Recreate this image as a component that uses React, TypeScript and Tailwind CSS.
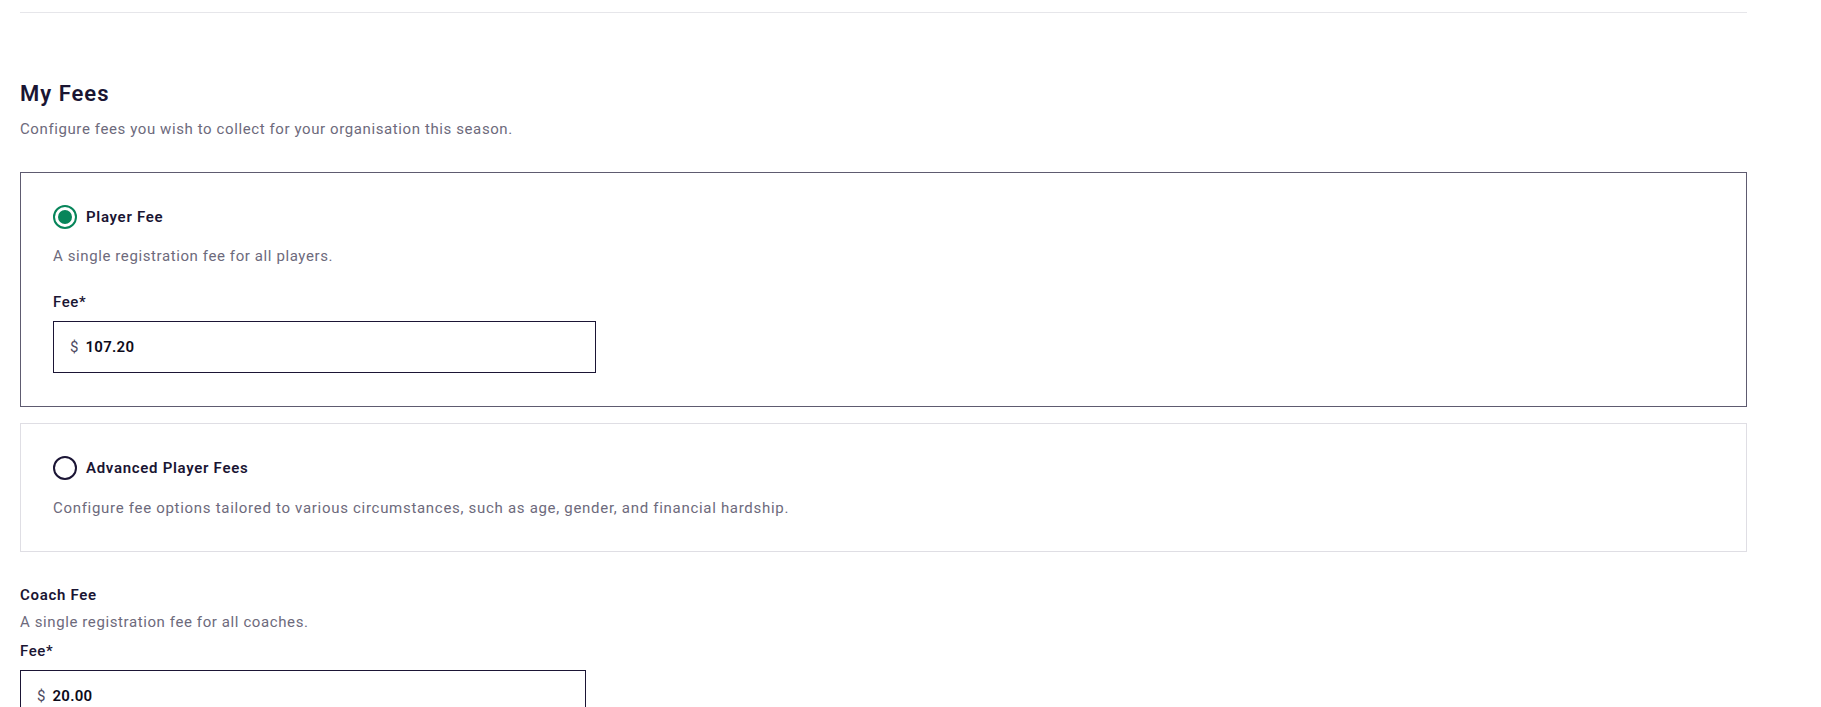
import React, { useState } from "react";

type FeeOption = "player" | "advanced";

const font = { fontFamily: "Roboto, 'Liberation Sans', sans-serif" };

const Radio = ({ checked }: { checked: boolean }) =>
  checked ? (
    <span className="flex h-6 w-6 shrink-0 items-center justify-center rounded-full border-[2.5px] border-[#07855a]">
      <span className="h-[14px] w-[14px] rounded-full bg-[#07855a]" />
    </span>
  ) : (
    <span className="h-6 w-6 shrink-0 rounded-full border-2 border-[#1b1535]" />
  );

const MoneyInput = ({ value, width }: { value: string; width: string }) => (
  <div className={`flex h-[52px] items-center gap-[7px] border border-[#1b1535] bg-white px-4 ${width}`}>
    <span className="text-[15px] text-[#4d4a60]">$</span>
    <span className="text-[15px] font-semibold tracking-[0.3px] text-[#0d0b1a]">{value}</span>
  </div>
);

const App = () => {
  const [option, setOption] = useState<FeeOption>("player");

  return (
    <div className="min-h-screen bg-white pl-5 pr-[74px] pt-3 text-[#1a1533]" style={font}>
      <div className="border-t border-[#e6e6ea]" />

      <h2 className="mt-[67px] text-[22px] font-semibold leading-7 tracking-[1px]">My Fees</h2>
      <p className="mt-[11px] text-[15px] leading-5 tracking-[0.6px] text-[#6d6a7c]">
        Configure fees you wish to collect for your organisation this season.
      </p>

      <div
        onClick={() => setOption("player")}
        className={`mt-[33px] cursor-pointer border p-8 ${option === "player" ? "border-[#5e5b70]" : "border-[#dfdee4]"}`}
      >
        <div className="flex items-center gap-[9px]">
          <Radio checked={option === "player"} />
          <span className="text-[15px] font-semibold tracking-[0.7px]">Player Fee</span>
        </div>
        <p className="mt-[17px] text-[15px] leading-5 tracking-[0.6px] text-[#6d6a7c]">
          A single registration fee for all players.
        </p>
        {option === "player" && (
          <>
            <div className="mt-[26px] text-[15px] font-medium leading-5 tracking-[0.6px]">Fee*</div>
            <div className="mt-[9px]">
              <MoneyInput value="107.20" width="w-[543px]" />
            </div>
          </>
        )}
        <div className="h-px" />
      </div>

      <div
        onClick={() => setOption("advanced")}
        className={`mt-4 cursor-pointer border p-8 ${option === "advanced" ? "border-[#5e5b70]" : "border-[#dfdee4]"}`}
      >
        <div className="flex items-center gap-[9px]">
          <Radio checked={option === "advanced"} />
          <span className="text-[15px] font-semibold tracking-[0.7px]">Advanced Player Fees</span>
        </div>
        <p className="mt-[18px] text-[15px] leading-5 tracking-[0.7px] text-[#6d6a7c]">
          Configure fee options tailored to various circumstances, such as age, gender, and financial hardship.
        </p>
        <div className="h-px" />
      </div>

      <div className="mt-[31px] text-[15px] font-semibold leading-6 tracking-[0.7px]">Coach Fee</div>
      <p className="mt-[3px] text-[15px] leading-6 tracking-[0.6px] text-[#6d6a7c]">
        A single registration fee for all coaches.
      </p>
      <div className="mt-[5px] text-[15px] font-medium leading-6 tracking-[0.6px]">Fee*</div>
      <div className="mt-[7px] pb-10">
        <MoneyInput value="20.00" width="w-[566px]" />
      </div>
    </div>
  );
};

export default App;
